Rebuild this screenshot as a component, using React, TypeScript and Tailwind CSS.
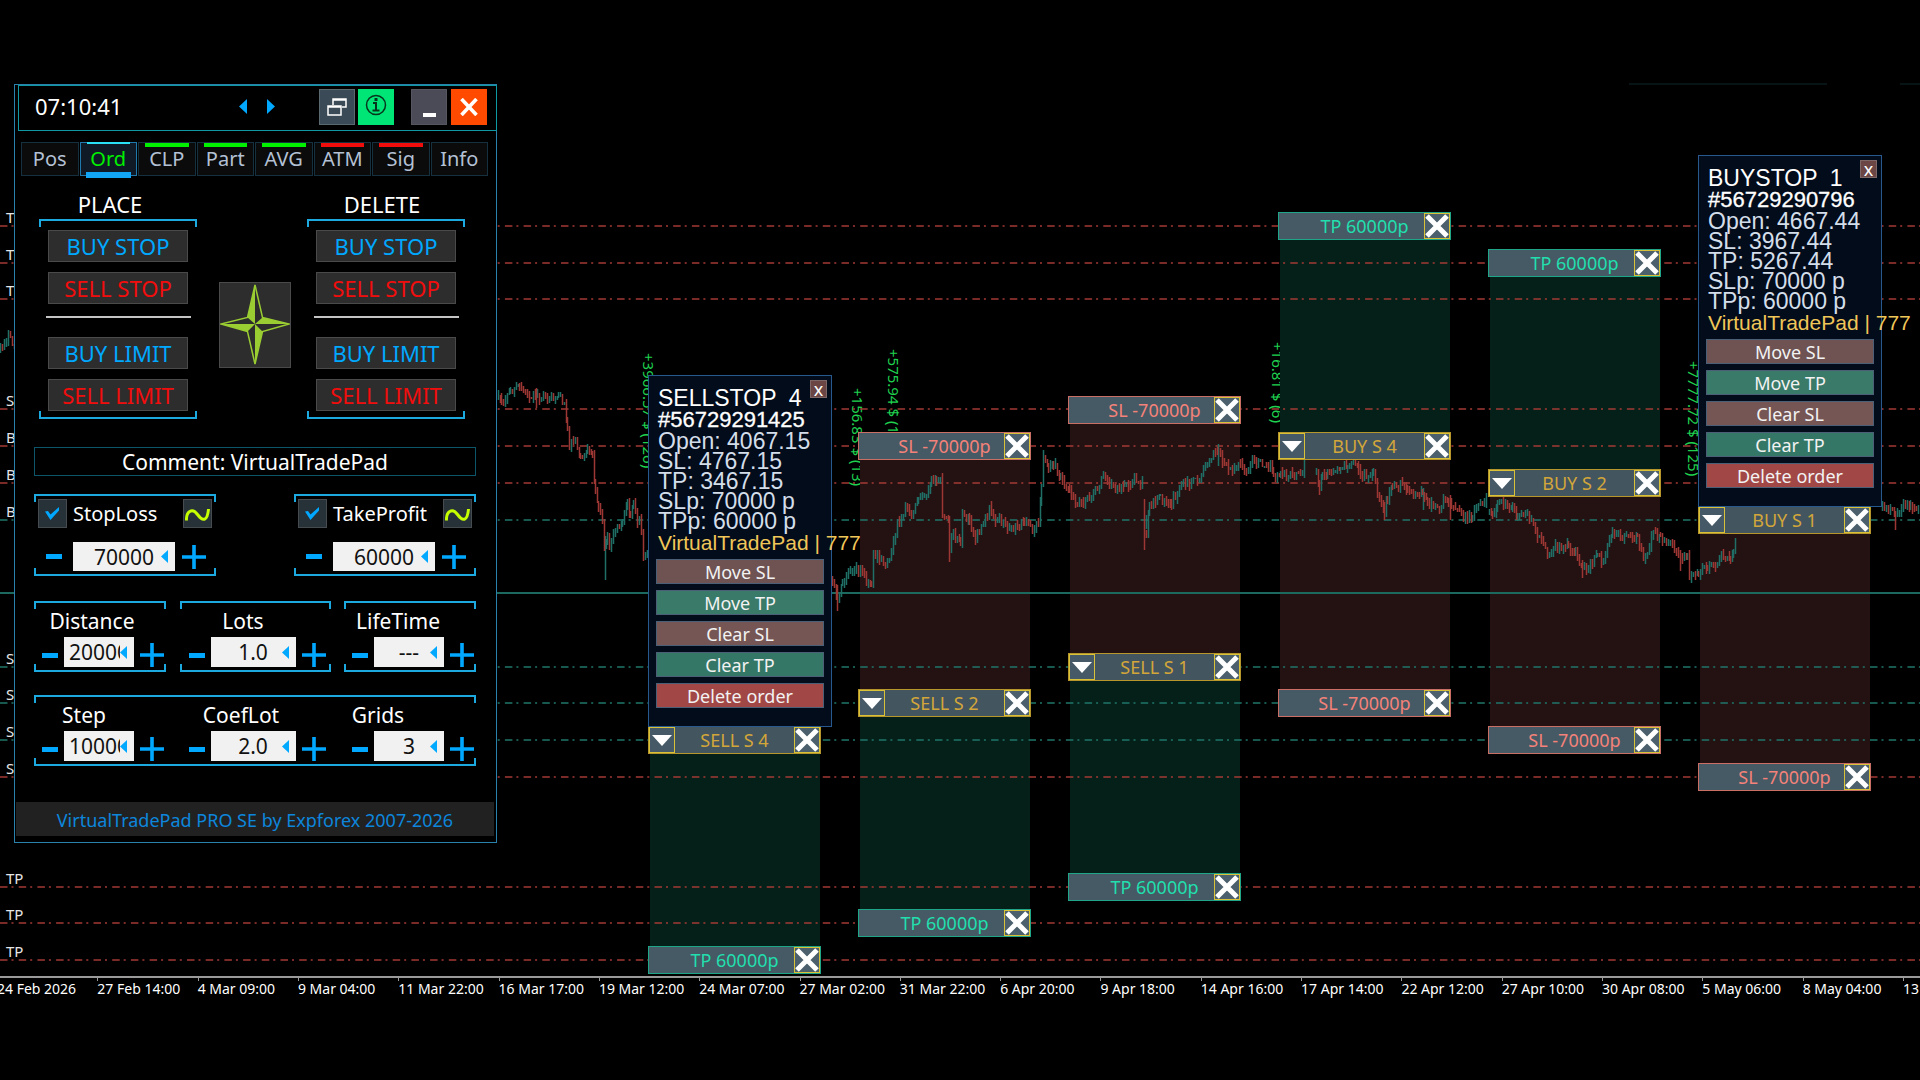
import { useState, type ReactNode } from "react";

const COLUMN_WIDTH = 172;
const BAR_HEIGHT = 28;

// Horizontal price levels, top to bottom
const levels = [
  { y: 226, color: "#a33a35", label: "TP" },
  { y: 263, color: "#a33a35", label: "TP" },
  { y: 299, color: "#a33a35", label: "TP" },
  { y: 409, color: "#a33a35", label: "SL" },
  { y: 446, color: "#a33a35", label: "BUY" },
  { y: 483, color: "#a33a35", label: "BUY" },
  { y: 520, color: "#1f756a", label: "BUY" },
  { y: 667, color: "#1f756a", label: "SELL" },
  { y: 703, color: "#1f756a", label: "SELL" },
  { y: 740, color: "#1f756a", label: "SELL" },
  { y: 777, color: "#a33a35", label: "SL" },
  { y: 887, color: "#a33a35", label: "TP" },
  { y: 923, color: "#a33a35", label: "TP" },
  { y: 960, color: "#a33a35", label: "TP" },
];

const orders = [
  { id: "SELL S 4", x: 649, entry: 740, sl: 483, tp: 960 },
  { id: "SELL S 2", x: 859, entry: 703, sl: 446, tp: 923 },
  { id: "SELL S 1", x: 1069, entry: 667, sl: 410, tp: 887 },
  { id: "BUY S 4", x: 1279, entry: 446, sl: 703, tp: 226 },
  { id: "BUY S 2", x: 1489, entry: 483, sl: 740, tp: 263 },
  { id: "BUY S 1", x: 1699, entry: 520, sl: 777, tp: 299 },
];

const deals = [
  { text: "+3966.57 $ (126)", x: 639, y: 353 },
  { text: "+156.83 $ (13)", x: 848, y: 388 },
  { text: "+575.94 $ (19)", x: 884, y: 349 },
  { text: "+16.81 $ (6)", x: 1268, y: 342 },
  { text: "+7777.72 $ (125)", x: 1684, y: 361 },
];

const dates = [
  "24 Feb 2026", "27 Feb 14:00", "4 Mar 09:00", "9 Mar 04:00", "11 Mar 22:00",
  "16 Mar 17:00", "19 Mar 12:00", "24 Mar 07:00", "27 Mar 02:00", "31 Mar 22:00",
  "6 Apr 20:00", "9 Apr 18:00", "14 Apr 16:00", "17 Apr 14:00", "22 Apr 12:00",
  "27 Apr 10:00", "30 Apr 08:00", "5 May 06:00", "8 May 04:00", "13 May 02:00",
];

// Price path, x/y pairs; each array is one uninterrupted run of candles
const pricePath: number[][] = [
  [0, 348, 4, 340, 8, 336, 12, 344, 16, 342],
  [498, 396, 501, 402, 510, 393, 519, 387, 527, 395, 535, 395, 547, 397, 553, 398, 558, 395, 564, 403,
    567, 427, 569, 445, 575, 438, 580, 458, 587, 452, 592, 455, 595, 487, 598, 507, 602, 517, 604, 547,
    607, 537, 609, 547, 615, 527, 622, 523, 627, 500, 630, 513, 633, 500, 637, 527, 639, 517, 643, 553, 648, 553],
  [832, 580, 837, 600, 842, 582, 848, 570, 854, 567, 860, 570, 866, 580, 871, 583, 873, 553, 879, 560,
    887, 562, 891, 550, 897, 523, 905, 507, 911, 517, 918, 497, 926, 492, 931, 477, 936, 482, 940, 477,
    942, 517, 948, 520, 949, 550, 953, 530, 960, 543, 962, 515, 969, 520, 975, 540, 983, 523, 989, 508,
    995, 518, 1003, 523, 1011, 528, 1024, 520, 1032, 530, 1038, 522, 1041, 487, 1043, 457, 1048, 468,
    1053, 462, 1060, 477, 1069, 487, 1075, 502, 1083, 503, 1091, 495, 1097, 488, 1103, 475, 1111, 485,
    1124, 488, 1134, 480, 1143, 483],
  [1146, 530, 1149, 502, 1160, 498, 1171, 502, 1179, 487, 1189, 482, 1199, 480, 1205, 463, 1211, 455,
    1218, 452, 1224, 463, 1232, 470, 1240, 463, 1244, 473, 1252, 460, 1264, 463, 1270, 466, 1273, 477,
    1280, 474, 1290, 475, 1302, 475, 1305, 458],
  [1316, 474, 1319, 487, 1322, 470, 1327, 475, 1335, 473, 1340, 466, 1347, 468, 1353, 462, 1358, 470,
    1366, 478, 1373, 475, 1377, 493, 1384, 511, 1387, 496, 1392, 486, 1398, 484, 1407, 486, 1413, 496,
    1422, 491, 1427, 505, 1435, 503, 1439, 511, 1443, 495, 1448, 500, 1451, 505, 1457, 511, 1463, 518,
    1472, 514, 1480, 500, 1488, 500],
  [1489, 514, 1492, 514, 1497, 500, 1505, 504, 1512, 507, 1517, 516, 1525, 511, 1533, 520, 1535, 532,
    1543, 543, 1547, 557, 1553, 546, 1568, 546, 1575, 555, 1582, 568, 1590, 566, 1597, 555, 1603, 562,
    1607, 543, 1612, 530, 1620, 539, 1628, 534, 1637, 537, 1643, 555, 1647, 554, 1653, 529, 1660, 538,
    1670, 543, 1680, 555, 1687, 557, 1689, 575, 1698, 572, 1700, 570, 1707, 567, 1715, 563, 1721, 552,
    1725, 558, 1730, 560, 1733, 547, 1737, 535],
  [1882, 508, 1890, 508, 1895, 514, 1899, 515, 1903, 502, 1910, 508, 1920, 507],
];

// Long single wicks
const spikes = [
  { x: 605, y1: 536, y2: 580, up: true },
  { x: 536, y1: 388, y2: 408, up: false },
  { x: 837, y1: 585, y2: 611, up: false },
  { x: 949, y1: 520, y2: 562, up: false },
  { x: 1043, y1: 450, y2: 480, up: true },
  { x: 1144, y1: 499, y2: 550, up: false },
  { x: 1146, y1: 515, y2: 529, up: true },
  { x: 1218, y1: 444, y2: 466, up: true },
  { x: 1384, y1: 502, y2: 520, up: false },
  { x: 1423, y1: 488, y2: 510, up: true },
  { x: 1450, y1: 495, y2: 520, up: false },
  { x: 1582, y1: 560, y2: 578, up: false },
  { x: 1680, y1: 550, y2: 571, up: false },
  { x: 1895, y1: 512, y2: 530, up: false },
];

function buildCandles() {
  let seed = 17;
  const rand = () => {
    seed = (seed * 16807) % 2147483647;
    return seed / 2147483647;
  };
  let up = "";
  let down = "";
  for (const run of pricePath) {
    let prev = run[1];
    for (let i = 0; i + 3 < run.length; i += 2) {
      const [x1, y1, x2, y2] = run.slice(i, i + 4);
      for (let x = x1; x < x2; x += 2) {
        const y = y1 + ((y2 - y1) * (x - x1)) / (x2 - x1) + (rand() - 0.5) * 7;
        const high = Math.round(Math.min(prev, y) - rand() * 5);
        const low = Math.round(Math.max(prev, y) + rand() * 5 + 1);
        const segment = `M${x + 0.5} ${high}V${low}`;
        if (y < prev) up += segment;
        else down += segment;
        prev = y;
      }
    }
  }
  for (const s of spikes) {
    const segment = `M${s.x + 0.5} ${s.y1}V${s.y2}`;
    if (s.up) up += segment;
    else down += segment;
  }
  return { up, down };
}

const candles = buildCandles();

function Chart() {
  return (
    <svg className="relative block h-[976px] w-full" aria-hidden="true">
      {orders.map((o) => (
        <g key={o.id}>
          <rect x={o.x + 1} y={Math.min(o.entry, o.sl)} width={COLUMN_WIDTH - 2} height={Math.abs(o.entry - o.sl)} fill="#241112" />
          <rect x={o.x + 1} y={Math.min(o.entry, o.tp)} width={COLUMN_WIDTH - 2} height={Math.abs(o.entry - o.tp)} fill="#042018" />
        </g>
      ))}
      {levels.map((l) => (
        <line key={l.y} x1="0" x2="100%" y1={l.y} y2={l.y} stroke={l.color} strokeWidth="1.4" strokeDasharray="7.5 4 2 5.2" />
      ))}
      <line x1="0" x2="100%" y1="593" y2="593" stroke="#1b695f" strokeWidth="2" />
      <line x1="1629" x2="1827" y1="84" y2="84" stroke="#10262c" />
      <line x1="1900" x2="100%" y1="84" y2="84" stroke="#10262c" />
      <path d={candles.up} stroke="#1f6f66" strokeWidth="1.5" />
      <path d={candles.down} stroke="#9c3734" strokeWidth="1.5" />
    </svg>
  );
}

function TimeAxis() {
  return (
    <div className="overflow-hidden border-t-2 border-[#9a9a9a] pb-2">
      <div className="-ml-[3px] flex w-[104.5%]">
        {dates.map((date) => (
          <div key={date} className="flex-1 text-[14px] leading-4 whitespace-nowrap text-white">
            <div className="h-[3px] w-px bg-[#9a9a9a]" />
            {date}
          </div>
        ))}
      </div>
    </div>
  );
}

type BarKind = "tp" | "sl" | "entry";

const barStyles: Record<BarKind, string> = {
  tp: "border-[#1fa588] text-[#22dfae] bg-[#455a64]",
  sl: "border-[#c96f66] text-[#f4827a] bg-[#455a64]",
  entry: "border-[#b7962c] text-[#d3a63a] bg-[#43565f]",
};

function OrderBar({ kind, text, x, y }: { kind: BarKind; text: string; x: number; y: number }) {
  return (
    <div
      className={`absolute flex w-[173px] items-stretch border ${barStyles[kind]}`}
      style={{ left: x - 1, top: y - BAR_HEIGHT / 2, height: BAR_HEIGHT }}
    >
      {kind === "entry" ? (
        <button aria-label={`Open ${text}`} className="flex w-[26px] items-center justify-center border border-[#d9c138] bg-[#455a66]">
          <svg width="20" height="11" viewBox="0 0 20 11"><path d="M0 0H20L10 11Z" fill="#fff" /></svg>
        </button>
      ) : (
        <span className="w-[26px]" />
      )}
      <span className="flex-1 text-center text-[18px] leading-[26px] whitespace-nowrap">{text}</span>
      <button aria-label={`Remove ${text}`} className="flex w-[26px] items-center justify-center border border-[#d9c138] bg-[#4b606c]">
        <svg width="24" height="24" viewBox="0 0 24 24">
          <path d="M2 2L22 22M22 2L2 22" stroke="#fff" strokeWidth="5" />
        </svg>
      </button>
    </div>
  );
}

interface OrderPopupProps {
  title: string;
  ticket: string;
  rows: string[];
  className: string;
}

const popupActions = [
  { text: "Move SL", className: "bg-[#6e5352]" },
  { text: "Move TP", className: "bg-[#3a7a68]" },
  { text: "Clear SL", className: "bg-[#755655]" },
  { text: "Clear TP", className: "bg-[#357767]" },
  { text: "Delete order", className: "bg-[#a14847]" },
];

function OrderPopup({ title, ticket, rows, className }: OrderPopupProps) {
  return (
    <section className={`absolute h-[352px] w-[184px] border border-[#27598f] bg-[#030c1a] pt-[11px] pr-[7px] pl-[7px] ${className}`}>
      <button
        aria-label="Close order window"
        className="absolute top-1 right-1 h-[18px] w-[17px] border border-[#7d6767] bg-[#6b4644] text-[18px] leading-[14px] text-white"
      >
        x
      </button>
      <div className="pl-[2px] font-['Liberation_Sans',sans-serif] text-[23px] whitespace-nowrap">
        <h2 className="leading-[22px] whitespace-pre text-white">{title}</h2>
        <p className="text-[22px] leading-[22px] text-white [-webkit-text-stroke:0.3px_white]">{ticket}</p>
        {rows.map((row) => (
          <p key={row} className="leading-5 text-[#d3deea]">{row}</p>
        ))}
        <p className="text-[21px] leading-6 text-[#f0c659]">VirtualTradePad | 777</p>
      </div>
      <div className="mt-[4px] flex flex-col gap-[6px]">
        {popupActions.map((action) => (
          <button key={action.text} className={`h-[25px] border border-[#4b6076] text-[18px] leading-[22px] text-[#f2f2f2] ${action.className}`}>
            {action.text}
          </button>
        ))}
      </div>
    </section>
  );
}

function Bracket({ className = "", children }: { className?: string; children: ReactNode }) {
  return (
    <div className={`relative ${className}`}>
      <div className="pointer-events-none absolute inset-x-0 top-0 h-2 border-2 border-b-0 border-[#1ca9df]" />
      <div className="pointer-events-none absolute inset-x-0 bottom-0 h-2 border-2 border-t-0 border-[#1ca9df]" />
      {children}
    </div>
  );
}

function OrderButton({ side, text }: { side: "buy" | "sell"; text: string }) {
  return (
    <button
      className={`h-8 w-[140px] border border-[#4a4a4a] bg-[#2d2d2d] text-[22px] leading-[28px] ${side === "buy" ? "text-[#00a8ff]" : "text-[#f20d0d]"}`}
    >
      {text}
    </button>
  );
}

function OrderGroup({ title, titleClass, className }: { title: string; titleClass: string; className: string }) {
  return (
    <div className={`w-[158px] ${className}`}>
      <h2 className={`mb-px text-center text-[22px] leading-7 text-white ${titleClass}`}>{title}</h2>
      <Bracket className="flex flex-col items-center pt-[11px] pb-2">
        <OrderButton side="buy" text="BUY STOP" />
        <div className="h-[10px]" />
        <OrderButton side="sell" text="SELL STOP" />
        <div className="mt-3 mb-[19px] h-[2px] w-[145px] bg-[#c4c4c4]" />
        <OrderButton side="buy" text="BUY LIMIT" />
        <div className="h-[10px]" />
        <OrderButton side="sell" text="SELL LIMIT" />
      </Bracket>
    </div>
  );
}

function ValueBox({ id, initial, className }: { id: string; initial: string; className: string }) {
  const [value, setValue] = useState(initial);
  return (
    <div className={`relative overflow-hidden bg-[#f1f1f1] ${className}`}>
      <input
        id={id}
        value={value}
        onChange={(e) => setValue(e.target.value)}
        className="h-full w-full bg-transparent p-0 text-center text-[21px] text-[#111] outline-none"
      />
      <button aria-label="Choose value" className="absolute inset-y-0 right-0 flex w-[14px] items-center bg-[#f1f1f1]">
        <svg width="7" height="13" viewBox="0 0 7 13"><path d="M0 6.500L7 0V13Z" fill="#00a8ff" /></svg>
      </button>
    </div>
  );
}

function MinusButton() {
  return (
    <button aria-label="Decrease" className="flex h-6 w-4 items-center">
      <span className="h-[5px] w-4 bg-[#00a8ff]" />
    </button>
  );
}

function PlusButton() {
  return (
    <button aria-label="Increase">
      <svg className="block" width="24" height="24" viewBox="0 0 24 24">
        <path d="M0 12H24M12 0V24" stroke="#00a8ff" strokeWidth="3.600" />
      </svg>
    </button>
  );
}

function LevelGroup({ id, label, value }: { id: string; label: string; value: string }) {
  return (
    <Bracket className="h-[82px] w-[182px] pt-[5px]">
      <div className="flex h-[29px] items-center pr-1 pl-1">
        <label className="flex items-center gap-[6px] text-[20px] leading-7 text-white">
          <input type="checkbox" defaultChecked className="peer sr-only" />
          <span className="flex size-[29px] items-center justify-center border border-[#454b4f] bg-[#263238]">
            <svg width="15" height="13" viewBox="0 0 15 13">
              <path d="M0 4.500L3 4L5.500 7.500L14 0V3.500L5.500 13Z" fill="#00a8ff" />
            </svg>
          </span>
          {label}
        </label>
        <button aria-label={`${label} mode`} className="ml-auto flex size-[29px] items-end justify-center border border-[#454b4f] bg-[#263238] pb-1">
          <svg width="25" height="15" viewBox="0 0 25 15">
            <path d="M1.500 12.500C1 4 7 -1 12.500 6.500S22.500 13 23.500 1" fill="none" stroke="#c6ff00" strokeWidth="3" />
          </svg>
        </button>
      </div>
      <div className="mt-[14px] flex items-center pl-3">
        <MinusButton />
        <label htmlFor={id} className="sr-only">{label} points</label>
        <ValueBox id={id} initial={value} className="mr-[7px] ml-[11px] h-[29px] w-[102px]" />
        <PlusButton />
      </div>
    </Bracket>
  );
}

interface StepperProps {
  id: string;
  label: string;
  value: string;
  wide?: boolean;
  labelClass: string;
}

function Stepper({ id, label, value, wide = false, labelClass }: StepperProps) {
  return (
    <div className={`pt-[5px] pb-[5px] ${wide ? "w-[151px]" : "w-[132px]"}`}>
      <label htmlFor={id} className={`mb-px block text-center text-[21px] leading-[30px] text-white ${labelClass}`}>{label}</label>
      <div className={`flex items-end gap-[6px] ${wide ? "pl-[9px]" : "pl-2"}`}>
        <MinusButton />
        <ValueBox id={id} initial={value} className={`h-[30px] ${wide ? "w-[85px]" : "w-[70px]"}`} />
        <PlusButton />
      </div>
    </div>
  );
}

const tabs = [
  { name: "Pos", bar: "" },
  { name: "Ord", bar: "" },
  { name: "CLP", bar: "bg-[#00f000]" },
  { name: "Part", bar: "bg-[#00f000]" },
  { name: "AVG", bar: "bg-[#00f000]" },
  { name: "ATM", bar: "bg-[#f20d0d]" },
  { name: "Sig", bar: "bg-[#f20d0d]" },
  { name: "Info", bar: "" },
];

function Tabs() {
  const [active, setActive] = useState("Ord");
  return (
    <nav className="mt-[11px] mr-[8px] ml-[6px] flex gap-px">
      {tabs.map((tab) => {
        const isActive = tab.name === active;
        return (
          <button
            key={tab.name}
            onClick={() => setActive(tab.name)}
            className={`relative h-[34px] w-0 grow border text-[20px] leading-8 ${isActive ? "border-[#2079ad] bg-[#101a26] text-[#00f000]" : "border-[#15303f] bg-[#0b0b0b] text-[#b4c1d4]"}`}
          >
            {tab.bar && <span className={`absolute inset-x-[6px] top-0 h-1 ${tab.bar}`} />}
            {isActive && <span className="absolute inset-x-[6px] -top-px h-[2px] bg-[#29e0f5]" />}
            {isActive && <span className="absolute inset-x-[5px] -bottom-[3px] h-[6px] bg-[#12a5f5]" />}
            {tab.name}
          </button>
        );
      })}
    </nav>
  );
}

function PadHeader() {
  return (
    <header className="-mr-px ml-[3px] flex h-[46px] items-center border border-[#0f9aa3] pr-[9px] pb-[3px] pl-4">
      <time className="text-[22px] text-white">07:10:41</time>
      <div className="ml-auto flex gap-5 pr-[44px]">
        <button aria-label="Previous">
          <svg className="block" width="8" height="15" viewBox="0 0 8 15"><path d="M0 7.500L8 0V15Z" fill="#00a8ff" /></svg>
        </button>
        <button aria-label="Next">
          <svg className="block" width="8" height="15" viewBox="0 0 8 15"><path d="M8 7.500L0 0V15Z" fill="#00a8ff" /></svg>
        </button>
      </div>
      <div className="flex gap-[3px]">
        <button aria-label="Restore window" className="flex size-9 items-center justify-center border border-[#5a6870] bg-[#3b4a57]">
          <svg width="20" height="18" viewBox="0 0 20 18" fill="none" stroke="#fff" strokeWidth="1.500">
            <path d="M6 7V1H19V9H15M6 2H19M1 8H14V17H1ZM1 9H14" />
          </svg>
        </button>
        <button aria-label="Information" className="flex size-9 items-center justify-center bg-[#00e676] pb-1">
          <svg width="22" height="22" viewBox="0 0 22 22" fill="none" stroke="#06351c" strokeWidth="1.500">
            <circle cx="11" cy="11" r="9.500" />
            <path d="M8 9H11V16M7.500 16.500H14.500" strokeWidth="2" />
            <path d="M9.500 5.500H12.500" strokeWidth="3" />
          </svg>
        </button>
      </div>
      <div className="ml-[17px] flex gap-1">
        <button aria-label="Minimize" className="flex size-9 items-end justify-center border border-[#55565f] bg-[#4a4b57] pb-[7px]">
          <span className="h-1 w-[13px] bg-white" />
        </button>
        <button aria-label="Close" className="flex size-9 items-center justify-center bg-[#ff4a00]">
          <svg width="18" height="18" viewBox="0 0 18 18"><path d="M1.500 1L16.500 17M16.500 1L1.500 17" stroke="#fff" strokeWidth="3.600" /></svg>
        </button>
      </div>
    </header>
  );
}

function TradePad() {
  return (
    <section className="absolute top-[84px] left-[14px] w-[483px] border border-[#2a82ac] bg-black pb-[6px]">
      <PadHeader />
      <Tabs />
      <div className="mt-[14px] flex items-start pl-6">
        <OrderGroup title="PLACE" titleClass="pr-4" className="" />
        <button aria-label="Place grid" className="mt-[92px] ml-[22px] h-[86px] w-[72px] border border-[#4a4a4a] bg-[#2d2d2d]">
          <svg className="block" width="70" height="84" viewBox="0 0 70 84">
            <path d="M35 2L42.500 34.500L69 41L42.500 48.500L35 81L27.500 48.500L1 41L27.500 34.500Z" fill="#2d2d2d" stroke="#9acd32" strokeWidth="1.500" />
            <path d="M35 2V41L27.500 34.500ZM69 41H35L42.500 34.500ZM35 81V41L42.500 48.500ZM1 41H35L27.500 48.500Z" fill="#9acd32" />
          </svg>
        </button>
        <OrderGroup title="DELETE" titleClass="pr-2" className="ml-4" />
      </div>
      <div className="pt-7 pr-5 pl-[19px]">
        <button className="block h-[29px] w-full border border-[#0d5568] text-[21px] leading-[29px] text-white">
          Comment: VirtualTradePad
        </button>
        <div className="mt-[18px] flex justify-between">
          <LevelGroup id="sl" label="StopLoss" value="70000" />
          <LevelGroup id="tp" label="TakeProfit" value="60000" />
        </div>
        <div className="mt-[25px] flex justify-between">
          <Bracket><Stepper id="distance" label="Distance" value="20000" labelClass="pr-4" /></Bracket>
          <Bracket><Stepper id="lots" label="Lots" value="1.0" wide labelClass="pr-6" /></Bracket>
          <Bracket><Stepper id="lifetime" label="LifeTime" value="---" labelClass="pr-6" /></Bracket>
        </div>
        <Bracket className="mt-[23px] flex justify-between">
          <Stepper id="step" label="Step" value="10000" labelClass="pr-8" />
          <Stepper id="coeflot" label="CoefLot" value="2.0" wide labelClass="pr-7" />
          <Stepper id="grids" label="Grids" value="3" labelClass="pr-16" />
        </Bracket>
      </div>
      <footer className="mt-9 mr-[2px] ml-px h-[34px] bg-[#212121] text-center text-[18px] leading-[36px]">
        <a href="#expforex" className="text-[#0d86dc]">VirtualTradePad PRO SE by Expforex 2007-2026</a>
      </footer>
    </section>
  );
}

export default function App() {
  return (
    <main className="relative min-h-screen overflow-hidden bg-black font-['Noto_Sans',sans-serif] text-[#e6e6e6]">
      {/* Deal results sit behind the order zones */}
      {deals.map((d) => (
        <span
          key={d.text}
          className="absolute text-[15px] leading-5 whitespace-nowrap text-[#1fd14f] [writing-mode:vertical-rl]"
          style={{ left: d.x, top: d.y }}
        >
          {d.text}
        </span>
      ))}

      <Chart />
      <TimeAxis />

      {levels.map((l) => (
        <span key={l.y} className="absolute left-[6px] text-[15px] leading-5" style={{ top: l.y - 19 }}>
          {l.label}
        </span>
      ))}

      {orders.map((o) => (
        <div key={o.id}>
          <OrderBar kind="sl" text="SL -70000p" x={o.x} y={o.sl} />
          <OrderBar kind="tp" text="TP 60000p" x={o.x} y={o.tp} />
          <OrderBar kind="entry" text={o.id} x={o.x} y={o.entry} />
        </div>
      ))}

      <OrderPopup
        className="top-[375px] left-[648px]"
        title="SELLSTOP  4"
        ticket="#56729291425"
        rows={["Open: 4067.15", "SL: 4767.15", "TP: 3467.15", "SLp: 70000 p", "TPp: 60000 p"]}
      />
      <OrderPopup
        className="top-[155px] left-[1698px]"
        title="BUYSTOP  1"
        ticket="#56729290796"
        rows={["Open: 4667.44", "SL: 3967.44", "TP: 5267.44", "SLp: 70000 p", "TPp: 60000 p"]}
      />
      <TradePad />
    </main>
  );
}
